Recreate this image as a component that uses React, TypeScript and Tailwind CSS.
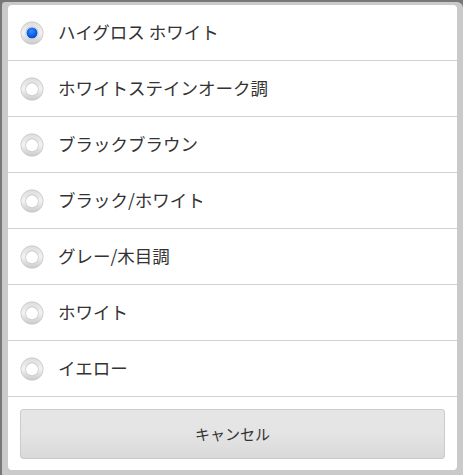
import React from "react";

const items = [
  "ハイグロス ホワイト",
  "ホワイトステインオーク調",
  "ブラックブラウン",
  "ブラック/ホワイト",
  "グレー/木目調",
  "ホワイト",
  "イエロー",
];

function Radio({ checked }: { checked: boolean }) {
  return (
    <svg width="24" height="24" viewBox="0 0 24 24" className="shrink-0">
      <defs>
        <linearGradient id="ring" x1="0" y1="0" x2="0" y2="1">
          <stop offset="0" stopColor="#dcdcdc" />
          <stop offset="0.5" stopColor="#f2f2f2" />
          <stop offset="1" stopColor="#c9c9c9" />
        </linearGradient>
        <radialGradient id="dot" cx="0.45" cy="0.35" r="0.7">
          <stop offset="0" stopColor="#3f8cff" />
          <stop offset="0.6" stopColor="#0b5ee8" />
          <stop offset="1" stopColor="#0a47c0" />
        </radialGradient>
      </defs>
      <circle cx="12" cy="12" r="11.2" fill="url(#ring)" stroke="#c6c6c6" strokeWidth="0.8" />
      <circle cx="12" cy="12" r="6.6" fill="#c2c2c2" />
      <circle cx="12" cy="12.3" r="6" fill="#ffffff" />
      {checked && <circle cx="12" cy="12" r="5.5" fill="url(#dot)" />}
    </svg>
  );
}

export default function App() {
  return (
    <div
      className="w-[463px] h-[475px] bg-[#777777] pt-[2px] pl-[2px] overflow-hidden"
      style={{ fontFamily: '"Noto Sans CJK JP", "Noto Sans", sans-serif' }}
    >
      <div className="w-[461px] h-[473px] bg-[#cacaca] rounded-tr-[6px] rounded-tl-[3px] pt-[3px] pl-[6px] pr-[4px]">
        <div className="w-[449px] h-[465px] bg-white rounded-[4px] flex flex-col">
          {items.map((t, i) => (
            <div
              key={t}
              className="h-[56px] border-b border-[#d0d0d0] flex items-center pl-[12px] gap-[14px] shrink-0"
            >
              <Radio checked={i === 0} />
              <span className="text-[17.5px] text-[#333333] leading-none -mt-[1px]">{t}</span>
            </div>
          ))}
          <div className="flex-1 px-[12px] pt-[12px]">
            <div className="h-[50px] rounded-[3px] border border-[#cbcbcb] bg-gradient-to-b from-[#e6e6e6] via-[#e4e4e4] to-[#d9d9d9] flex items-center justify-center text-[15px] text-[#333333]">
              キャンセル
            </div>
          </div>
        </div>
      </div>
    </div>
  );
}
